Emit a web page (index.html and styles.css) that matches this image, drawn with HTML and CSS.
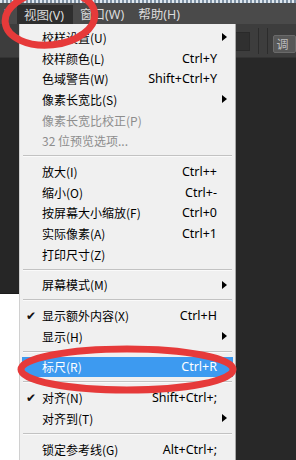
FILE: index.html
```html
<!DOCTYPE html>
<html lang="zh-CN">
<head>
    <meta charset="UTF-8">
    <meta name="viewport" content="width=device-width, initial-scale=1.0">
    <title>视图菜单</title>
    <link rel="stylesheet" href="styles.css">
</head>
<body>
    <div class="screen">
        <div class="titleStrip"></div>

        <div class="menubar">
            <span class="barItem">)</span>
            <span class="barItem barActive">视图(V)</span>
            <span class="barItem">窗口(W)</span>
            <span class="barItem">帮助(H)</span>
        </div>

        <div class="toolbar">
            <div class="toolInput"></div>
            <div class="toolSep"></div>
            <div class="toolSep"></div>
            <div class="toolButton">调</div>
        </div>

        <div class="workspace">
            <div class="leftColumn">
                <div class="panelDark"></div>
                <div class="canvas"></div>
            </div>
            <div class="rightColumn"></div>
        </div>

        <!-- dropdown menu over the workspace -->
        <ul class="menu">
            <li class="item"><span class="label">校样设置(U)</span><span class="arrow"></span></li>
            <li class="item"><span class="label">校样颜色(L)</span><span class="key">Ctrl+Y</span></li>
            <li class="item"><span class="label">色域警告(W)</span><span class="key">Shift+Ctrl+Y</span></li>
            <li class="item"><span class="label">像素长宽比(S)</span><span class="arrow"></span></li>
            <li class="item disabled"><span class="label">像素长宽比校正(P)</span></li>
            <li class="item disabled"><span class="label">32 位预览选项...</span></li>
            <li class="sep"></li>
            <li class="item"><span class="label">放大(I)</span><span class="key">Ctrl++</span></li>
            <li class="item"><span class="label">缩小(O)</span><span class="key">Ctrl+-</span></li>
            <li class="item"><span class="label">按屏幕大小缩放(F)</span><span class="key">Ctrl+0</span></li>
            <li class="item"><span class="label">实际像素(A)</span><span class="key">Ctrl+1</span></li>
            <li class="item"><span class="label">打印尺寸(Z)</span></li>
            <li class="sep"></li>
            <li class="item"><span class="label">屏幕模式(M)</span><span class="arrow"></span></li>
            <li class="sep"></li>
            <li class="item"><span class="check">✔</span><span class="label">显示额外内容(X)</span><span class="key">Ctrl+H</span></li>
            <li class="item"><span class="label">显示(H)</span><span class="arrow"></span></li>
            <li class="sep"></li>
            <li class="item selected"><span class="label">标尺(R)</span><span class="key">Ctrl+R</span></li>
            <li class="sep"></li>
            <li class="item"><span class="check">✔</span><span class="label">对齐(N)</span><span class="key">Shift+Ctrl+;</span></li>
            <li class="item"><span class="label">对齐到(T)</span><span class="arrow"></span></li>
            <li class="sep"></li>
            <li class="item"><span class="label">锁定参考线(G)</span><span class="key">Alt+Ctrl+;</span></li>
        </ul>

        <!-- red hand-drawn marks -->
        <svg class="marks" width="296" height="460" viewBox="0 0 296 460">
            <ellipse cx="50" cy="18" rx="45" ry="27" transform="rotate(-6 50 18)" />
            <ellipse cx="127" cy="369.5" rx="106" ry="20.5" />
        </svg>
    </div>
</body>
</html>
```

FILE: styles.css
```css
body {
    margin: 0;
    padding: 0;
    background-color: #282828;
}

.screen {
    position: relative;
    width: 296px;
    height: 460px;
    overflow: hidden;
    display: flex;
    flex-direction: column;
    font-family: "Noto Sans", "Noto Sans CJK SC", sans-serif;
    font-size: 12px;
}

.titleStrip {
    height: 3px;
    background-color: #9fb0c0;
    background-image: repeating-linear-gradient(90deg, #dfe8f0 0, #dfe8f0 2px, #7d90a3 2px, #7d90a3 4px);
}

.menubar {
    height: 21px;
    display: flex;
    align-items: stretch;
    background-color: #4a4a4a;
    color: #dcdcdc;
    font-size: 12.5px;
}

.barItem {
    display: flex;
    align-items: center;
    padding: 0 7px;
}

.barItem:first-child {
    width: 6px;
    padding-left: 4px;
}

.barActive {
    background-color: #2e2e2e;
    padding: 0 9px 0 7px;
    margin-top: 2px;
}

.toolbar {
    height: 33px;
    display: flex;
    align-items: center;
    padding-left: 235px;
    background-color: #3d3d3d;
    border-bottom: 1px solid #333333;
}

.toolInput {
    width: 17px;
    height: 17px;
    background-color: #303030;
    border: 1px solid #2a2a2a;
    margin-top: 2px;
}

.toolSep {
    width: 1px;
    height: 26px;
    background-color: #2c2c2c;
    margin-left: 8px;
}

.toolButton {
    width: 24px;
    height: 16px;
    margin-left: 5px;
    margin-top: 6px;
    background-color: #585858;
    border: 1px solid #6a6a6a;
    border-radius: 2px;
    color: #bdbdbd;
    font-family: "Noto Sans CJK SC", sans-serif;
    font-size: 12px;
    line-height: 16px;
    padding-left: 3px;
}

.workspace {
    flex: 1;
    display: flex;
}

.leftColumn {
    width: 19px;
    display: flex;
    flex-direction: column;
}

.panelDark {
    height: 235px;
    background-color: #262626;
    border-bottom: 1px solid #1c1c1c;
}

.canvas {
    flex: 1;
    background-color: #ffffff;
}

.rightColumn {
    flex: 1;
    background-color: #282828;
}

.menu {
    position: absolute;
    left: 19px;
    top: 24px;
    width: 217px;
    margin: 0;
    padding: 3px 2px 0 2px;
    box-sizing: border-box;
    list-style: none;
    background-color: #f0f0f0;
    border-left: 1px solid #d0d0d0;
    border-right: 1px solid #a8a8a8;
    height: 440px;
}

.item {
    position: relative;
    height: 20.7px;
    display: flex;
    align-items: center;
    color: #000000;
}

.label {
    margin-left: 20px;
    font-family: "Noto Sans CJK SC", sans-serif;
    font-size: 12px;
}

.key {
    margin-left: auto;
    margin-right: 16px;
    font-family: "Noto Sans", sans-serif;
    font-size: 12.5px;
}

.check {
    position: absolute;
    left: 4px;
    font-family: "DejaVu Sans", sans-serif;
    font-size: 12px;
    color: #111111;
}

.arrow {
    margin-left: auto;
    margin-right: 6px;
    width: 0;
    height: 0;
    border-top: 4px solid transparent;
    border-bottom: 4px solid transparent;
    border-left: 5px solid #000000;
}

.disabled {
    color: #8d8d8d;
}

.selected {
    background-color: #3d9af0;
    color: #ffffff;
}

.sep {
    height: 10px;
    display: flex;
    align-items: center;
    padding: 0 1px;
}

.sep::before {
    content: "";
    flex: 1;
    height: 1px;
    background-color: #c2c2c2;
    border-bottom: 1px solid #fafafa;
}

.marks {
    position: absolute;
    left: 0;
    top: 0;
}

.marks ellipse {
    fill: none;
    stroke: #e63a3a;
    stroke-width: 7;
}
```
